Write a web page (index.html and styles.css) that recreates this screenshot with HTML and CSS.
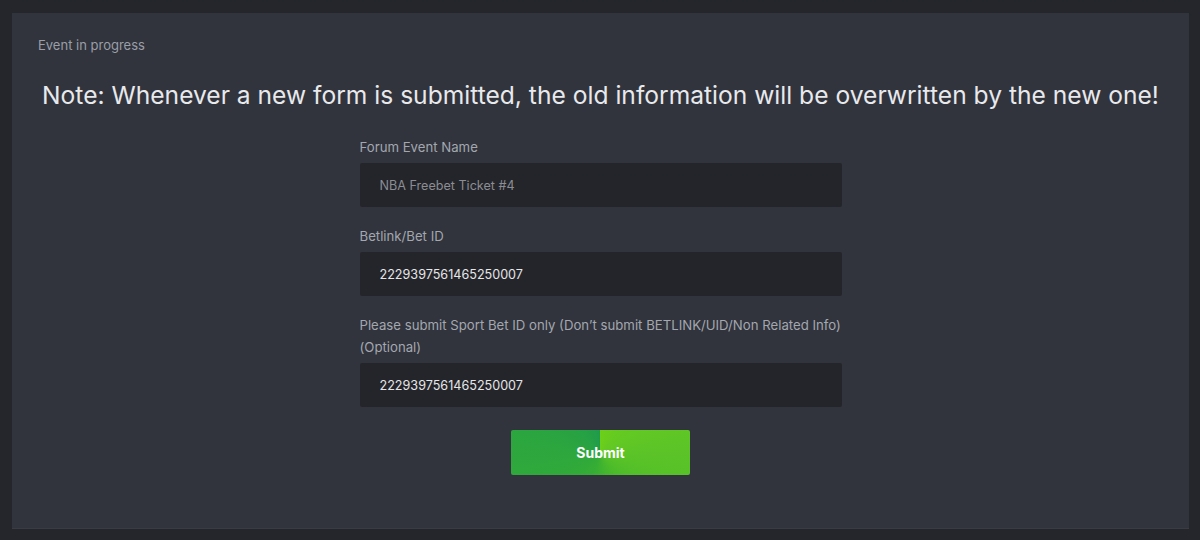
FILE: index.html
```html
<!DOCTYPE html>
<html lang="en">
<head>
  <meta charset="UTF-8" />
  <meta name="viewport" content="width=device-width, initial-scale=1.0"/>
  <title>Event in progress</title>
  <link rel="stylesheet" href="styles.css">
</head>
<body>
  <div class="panel">
    <div class="panel-title">Event in progress</div>
    <h2 class="note">Note: Whenever a new form is submitted, the old information will be overwritten by the new one!</h2>

    <form class="event-form" onsubmit="return false">
      <label for="eventName">Forum Event Name</label>
      <input type="text" id="eventName" placeholder="NBA Freebet Ticket #4">

      <label for="betlink">Betlink/Bet ID</label>
      <input type="text" id="betlink" value="2229397561465250007">

      <label for="sportBet">Please submit Sport Bet ID only (Don’t submit BETLINK/UID/Non Related Info) (Optional)</label>
      <input type="text" id="sportBet" value="2229397561465250007">

      <button type="submit" class="submit-btn">Submit</button>
    </form>
  </div>
</body>
</html>
```

FILE: styles.css
```css
body {
  margin: 0;
  padding: 13px 11px 11px 12px;
  background-color: #25262b;
  font-family: Inter, "Noto Sans", sans-serif;
  height: 540px;
  box-sizing: border-box;
}

.panel {
  background-color: #31343c;
  height: 516px;
  box-sizing: border-box;
  padding: 24px 26px 0 26px;
  border-bottom: 1px solid #393c44;
}

.panel-title {
  color: #9a9ea8;
  font-size: 13px;
  line-height: 16px;
}

.note {
  margin: 26px 0 0 0;
  text-align: center;
  color: #e8e9ec;
  font-weight: 400;
  font-size: 24.6px;
  line-height: 32px;
  white-space: nowrap;
}

.event-form {
  width: 482px;
  margin: 25px auto 0 auto;
  display: flex;
  flex-direction: column;
}

.event-form label {
  color: #a3a7b0;
  font-size: 13.2px;
  line-height: 22px;
  margin-bottom: 5px;
  margin-right: -6px;
}

.event-form input {
  height: 44px;
  box-sizing: border-box;
  background-color: #24252a;
  border: none;
  border-radius: 2px;
  padding: 0 20px;
  color: #e6e6e8;
  font-family: Inter, "Noto Sans", sans-serif;
  font-size: 12.6px;
  margin-bottom: 18px;
  outline: none;
}

.event-form input::placeholder {
  color: #8b8d93;
}

.submit-btn {
  align-self: center;
  width: 179px;
  height: 45px;
  margin-top: 5px;
  border: none;
  border-radius: 2px;
  color: #ffffff;
  font-family: Inter, "Noto Sans", sans-serif;
  font-weight: 700;
  font-size: 14px;
  cursor: pointer;
  background: conic-gradient(from 0deg at 50% 55%, #6ccf1a 0deg, #5ec527 80deg, #4cbb2a 140deg, #36ad34 200deg, #2fa83c 260deg, #25a045 330deg, #1f9a4c 360deg);
}
```
